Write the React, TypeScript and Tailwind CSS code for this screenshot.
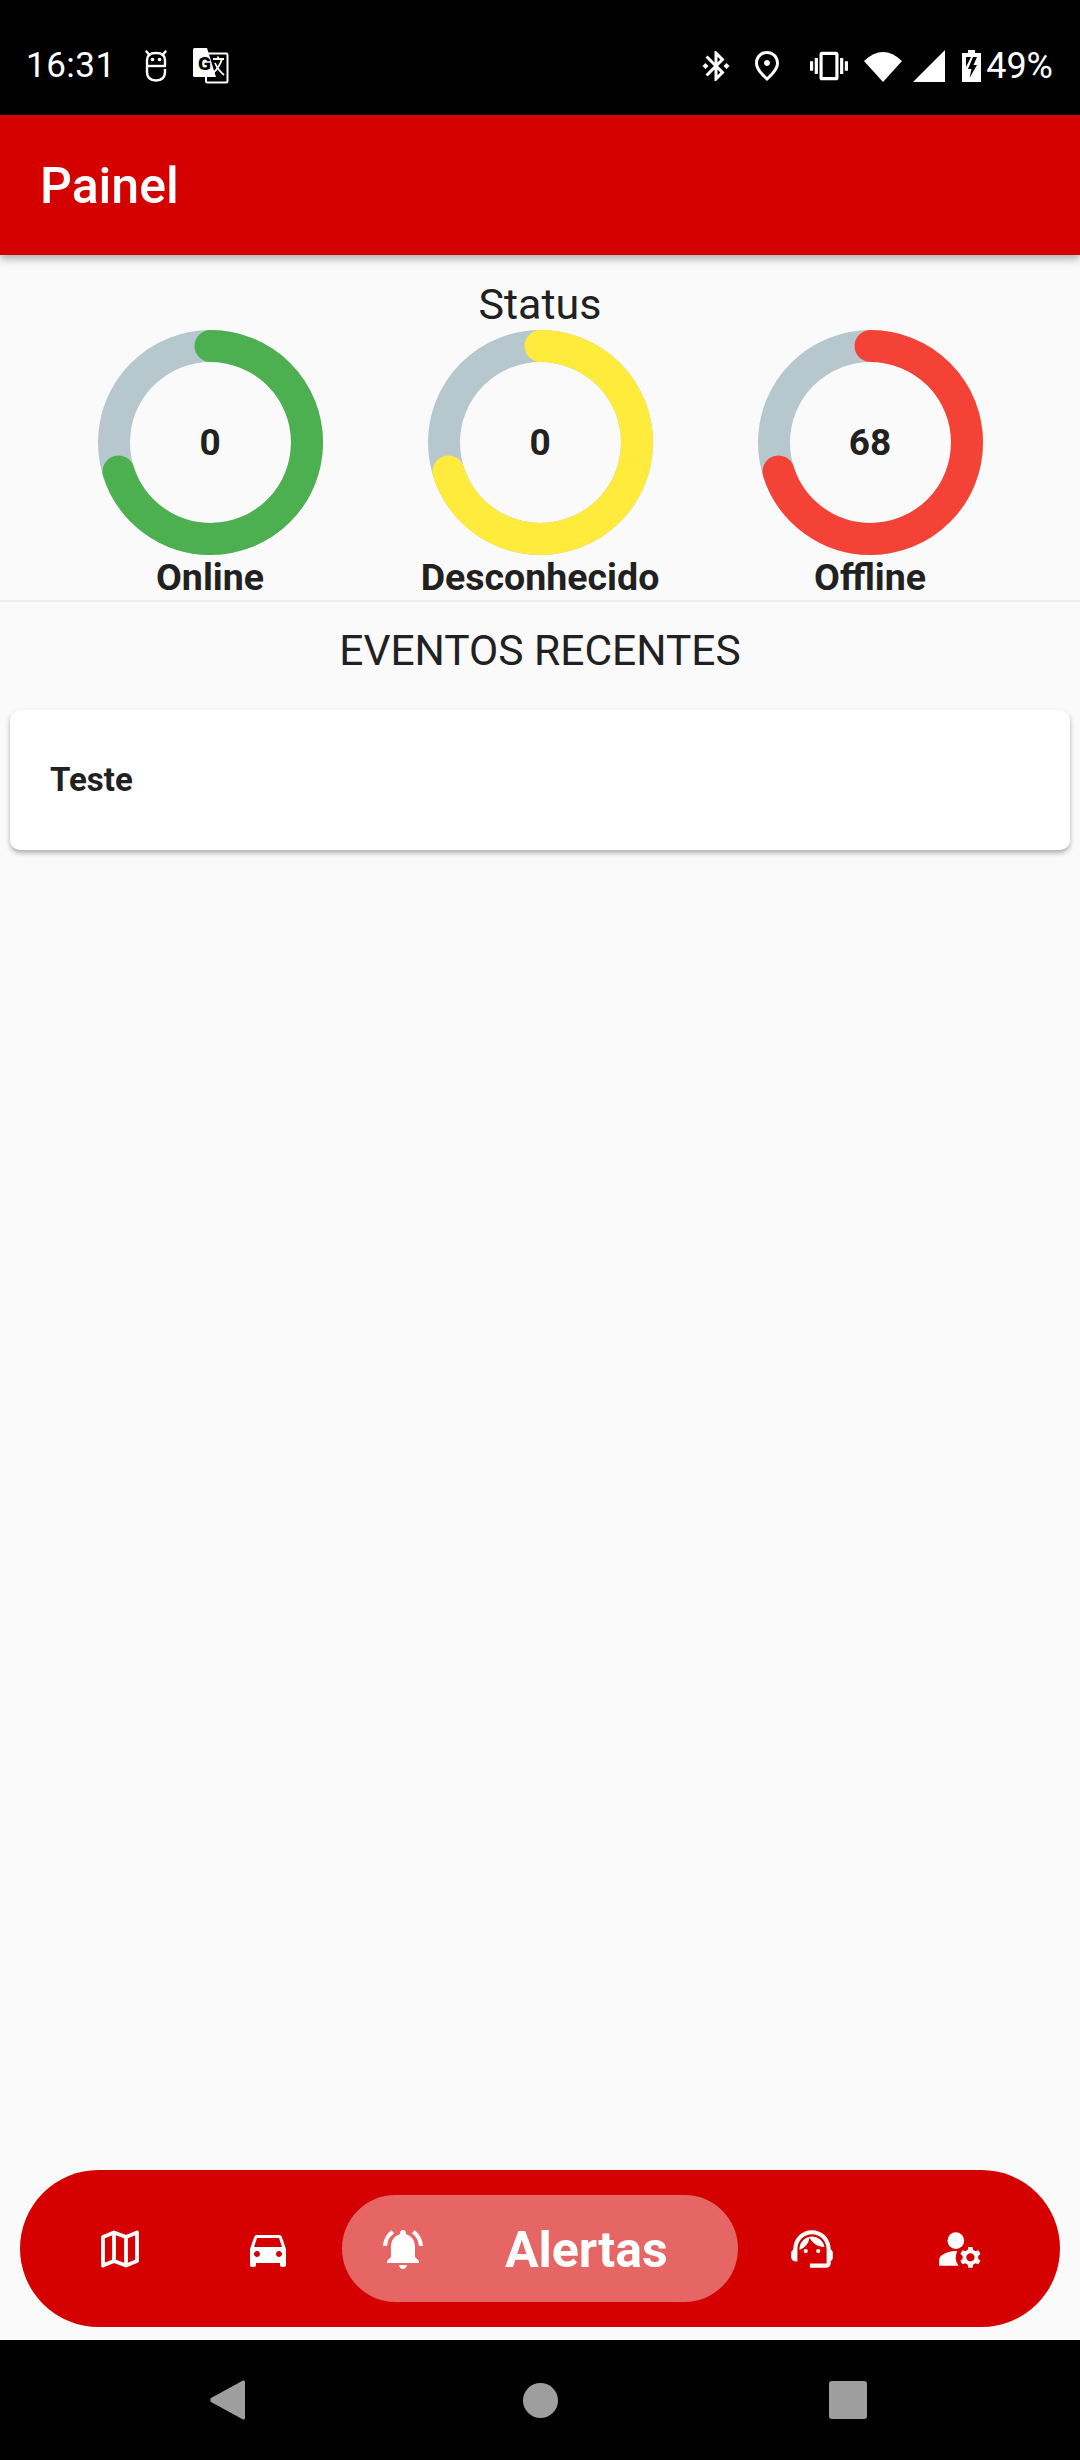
import { MdBluetoothConnected, MdDirectionsCar, MdManageAccounts, MdNotificationsActive, MdOutlinePlace, MdSupportAgent, MdVibration } from "react-icons/md";

const gauges = [
  { label: "Online", value: "0", color: "#4caf50" },
  { label: "Desconhecido", value: "0", color: "#ffeb3b" },
  { label: "Offline", value: "68", color: "#f44336" },
];

function Gauge({ label, value, color }: { label: string; value: string; color: string }) {
  const radius = 96.5;
  const circumference = 2 * Math.PI * radius;
  return (
    <div className="flex flex-col items-center">
      <div className="relative w-[225px] h-[225px]">
        <svg width="225" height="225" viewBox="0 0 225 225" className="-rotate-90">
          <circle cx="112.5" cy="112.5" r={radius} fill="none" stroke="#b6c7ce" strokeWidth="32" />
          <circle
            cx="112.5"
            cy="112.5"
            r={radius}
            fill="none"
            stroke={color}
            strokeWidth="32"
            strokeLinecap="round"
            strokeDasharray={`${circumference * 0.7} ${circumference}`}
          />
        </svg>
        <div className="absolute inset-0 flex items-center justify-center text-[37px] font-bold text-[#212121]">{value}</div>
      </div>
      <div className="mt-[2px] text-[37.5px] leading-[40px] font-bold text-[#212121] whitespace-nowrap">{label}</div>
    </div>
  );
}

function AndroidHead() {
  return (
    <svg width="22" height="32" viewBox="0 0 22 32" fill="none" stroke="white" strokeWidth="2.4">
      <path d="M1.5 1.5 L4.5 5 M20.5 1.5 L17.5 5" strokeLinecap="round" />
      <path d="M2 15 V10 Q2 3 11 3 Q20 3 20 10 V15" />
      <path d="M1 16 H21" />
      <path d="M2 16 V22 Q2 30.5 11 30.5 Q20 30.5 20 22 V19" />
      <circle cx="7.5" cy="9.5" r="1.8" fill="white" stroke="none" />
      <circle cx="14.5" cy="9.5" r="1.8" fill="white" stroke="none" />
    </svg>
  );
}

function TranslateIcon() {
  return (
    <svg width="36" height="36" viewBox="0 0 36 36">
      <rect x="13" y="5.5" width="21.5" height="29" rx="1.5" fill="black" stroke="white" strokeWidth="2" />
      <path d="M1.5 0 H14 L23 29 H1.5 Q0 29 0 27.5 V1.5 Q0 0 1.5 0 Z" fill="white" />
      <text x="5" y="22" fontFamily="Roboto, sans-serif" fontSize="19" fontWeight="900" fill="black">G</text>
      <path d="M20 11 H31 M25 8.5 V11 M29 11 Q26 20 20 25 M22 15 Q25 22 31 27" fill="none" stroke="white" strokeWidth="1.8" />
    </svg>
  );
}

function MapIcon() {
  return (
    <svg width="38" height="38" viewBox="0 0 38 38" fill="none" stroke="white" strokeWidth="3.8" strokeLinejoin="round">
      <path d="M2 7 L13 2.5 L25 7 L36 2.5 V31 L25 35.5 L13 31 L2 35.5 Z" />
      <path d="M13 2.5 V31 M25 7 V35.5" />
    </svg>
  );
}

function StatusBar() {
  return (
    <div className="flex h-[115px] items-center bg-black pl-[26px] pr-[27px] pt-[17px] text-white">
      <span className="w-[85px] text-[35px] tracking-[0.5px]">16:31</span>
      <div className="ml-[34px]">
        <AndroidHead />
      </div>
      <div className="ml-[26px]">
        <TranslateIcon />
      </div>
      <div className="ml-auto flex items-center">
        <MdBluetoothConnected size={36} />
        <MdOutlinePlace size={36} className="ml-[15px]" />
        <MdVibration size={38} className="ml-[25px]" />
        <svg width="38" height="31" viewBox="0 0 38 31" fill="white" className="ml-[16px]">
          <path d="M0 10 Q19 -8 38 10 L19 31 Z" />
        </svg>
        <svg width="32" height="32" viewBox="0 0 32 32" fill="white" className="ml-[11px]">
          <path d="M32 0 V32 H0 Z" />
        </svg>
        <svg width="19" height="32" viewBox="0 0 19 32" className="ml-[17px]">
          <path d="M6 0 H13 V3 H19 V32 H0 V3 H6 Z" fill="white" />
          <path d="M4 7 H9 L4 17 Z M15 7 H11 L6 19 H9.5 L7.5 28 L15 15 H11.5 Z" fill="black" />
        </svg>
        <span className="ml-[5px] text-[36px]">49%</span>
      </div>
    </div>
  );
}

function BottomNav() {
  return (
    <div className="mx-[20px] mb-[13px] flex h-[157px] w-[1040px] items-center rounded-full bg-[#d50000] px-[26px] text-white">
      <div className="flex w-[148px] justify-center">
        <MapIcon />
      </div>
      <div className="flex w-[148px] justify-center">
        <MdDirectionsCar size={48} />
      </div>
      <div className="flex h-[107px] w-[396px] items-center rounded-full bg-[#e66666] pl-[37px]">
        <MdNotificationsActive size={48} />
        <span className="ml-[78px] text-[50px] font-bold leading-[60px] pt-[2px]">Alertas</span>
      </div>
      <div className="flex w-[148px] justify-center">
        <MdSupportAgent size={50} />
      </div>
      <div className="flex w-[148px] justify-center">
        <MdManageAccounts size={50} />
      </div>
    </div>
  );
}

export default function App() {
  return (
    <div className="flex h-[2460px] w-[1080px] flex-col overflow-hidden bg-[#fafafa] font-['Roboto',sans-serif]">
      <StatusBar />
      <header className="relative z-10 flex h-[140px] items-center bg-[#d50000] px-[40px] pt-[2px] shadow-[0_4px_8px_rgba(0,0,0,0.3)]">
        <h1 className="text-[50px] font-medium text-white">Painel</h1>
      </header>

      <main className="flex-1">
        <div className="border-b-2 border-[#eeeeee] pb-[3px]">
          <div className="pt-[26px] text-center text-[43px] leading-[47px] text-[#212121]">Status</div>
          <div className="mt-[2px] grid grid-cols-[330px_330px_330px] justify-center">
            {gauges.map((g) => (
              <Gauge key={g.label} {...g} />
            ))}
          </div>
        </div>
        <div className="mt-[25px] text-center text-[42.5px] leading-[47px] text-[#212121]">EVENTOS RECENTES</div>
        <div className="mx-[10px] mt-[36px] flex h-[140px] items-center rounded-[10px] bg-white px-[40px] shadow-[0_3px_5px_rgba(0,0,0,0.3)]">
          <span className="text-[33px] font-bold text-[#212121]">Teste</span>
        </div>
      </main>

      <BottomNav />
      <div className="flex h-[120px] items-center bg-black">
        <svg width="35" height="40" viewBox="0 0 35 40" fill="#9e9e9e" className="ml-[210px]">
          <path d="M33 0.5 Q35 0 35 2 V38 Q35 40 33 39.5 L1 22 Q-0.5 20 1 18 Z" />
        </svg>
        <div className="ml-[278px] h-[35px] w-[35px] rounded-full bg-[#9e9e9e]" />
        <div className="ml-[271px] h-[38px] w-[38px] rounded-[3px] bg-[#9e9e9e]" />
      </div>
    </div>
  );
}
